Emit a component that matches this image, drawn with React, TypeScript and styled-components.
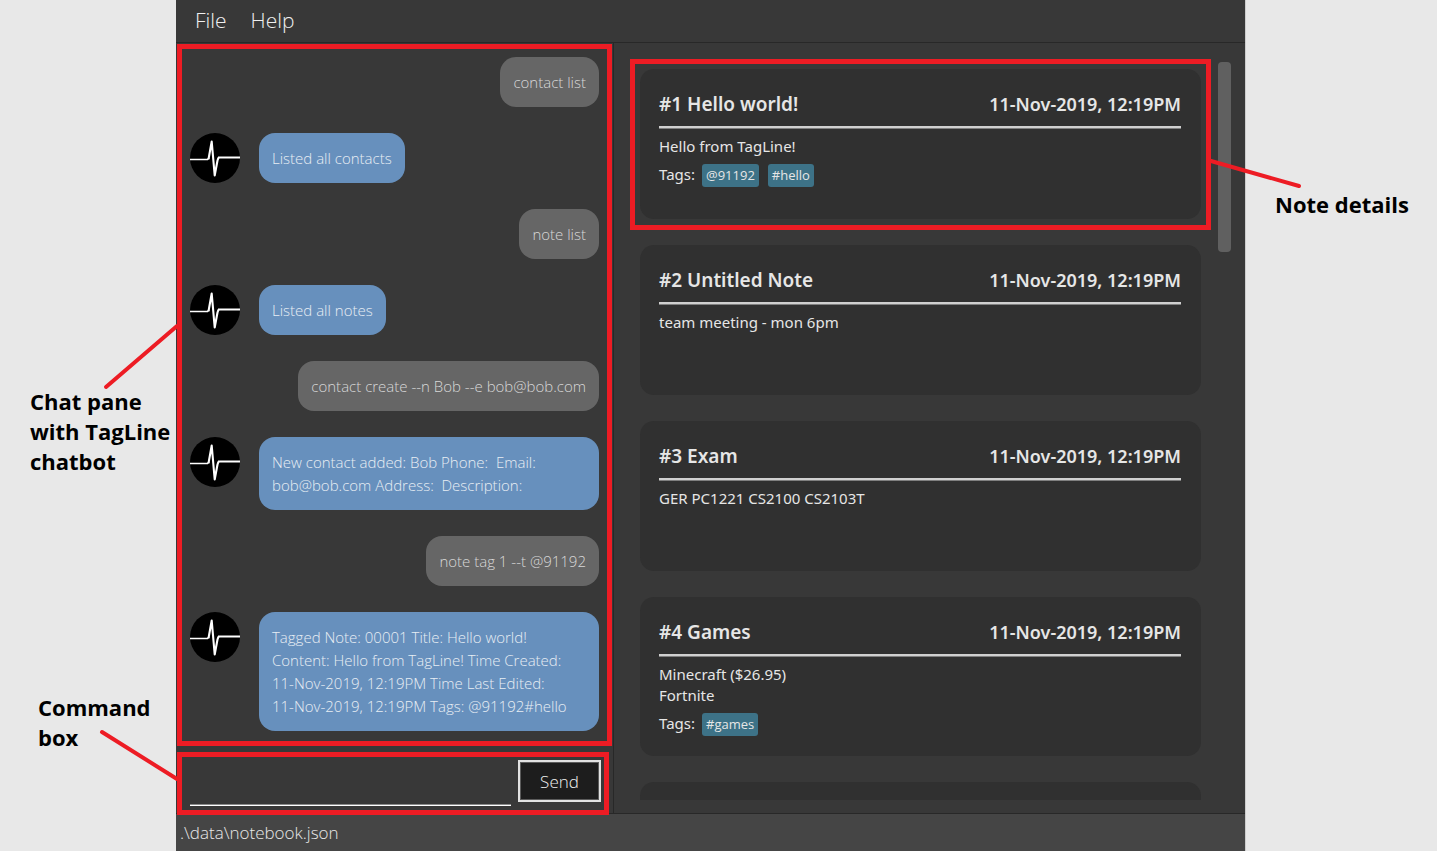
import React from "react";
import styled, { createGlobalStyle } from "styled-components";

const RED = "#ed1c24";

const GlobalStyle = createGlobalStyle`
  *, *::before, *::after { box-sizing: border-box; }
  body {
    margin: 0;
    background: #e8e8e8;
    font-family: "Open Sans", "Noto Sans", sans-serif;
  }
  h2, p, ul, ol { margin: 0; padding: 0; }
  ul, ol { list-style: none; }
`;

const Page = styled.div`
  display: grid;
  grid-template-columns: 176fr 1069fr 192fr;
  height: 100vh;
  overflow: hidden;
`;

const Gutter = styled.aside<{ $side: "left" | "right" }>`
  position: relative;
  z-index: 2;
  display: flex;
  flex-direction: column;
  padding-left: 30px;
  padding-top: ${(p) => (p.$side === "left" ? 386 : 189)}px;
  gap: 216px;
`;

const Callout = styled.p<{ $indent?: boolean }>`
  padding-left: ${(p) => (p.$indent ? 8 : 0)}px;
  color: #000;
  font-size: 22px;
  font-weight: 700;
  line-height: 30px;
  white-space: pre;
`;

const Leaders = styled.svg<{ $side: "left" | "right" }>`
  position: absolute;
  top: 0;
  ${(p) => (p.$side === "left" ? "right: 0;" : "left: 0;")}
  width: 176px;
  height: 851px;
  overflow: visible;
  pointer-events: none;
  stroke: ${RED};
  stroke-width: 4;
  stroke-linecap: round;
`;

const Window = styled.main`
  display: flex;
  flex-direction: column;
  min-height: 0;
  background: #383838;
  color: #e6e6e6;
  box-shadow: 1px 0 0 #cccccc;
`;

const MenuBar = styled.nav`
  display: flex;
  flex: none;
  align-items: center;
  gap: 24px;
  height: 43px;
  padding: 0 19px 3px;
  border-bottom: 1px solid #282828;
`;

const MenuButton = styled.button`
  padding: 0;
  border: 0;
  background: none;
  color: #f0f0f0;
  font: 300 21px/30px "Open Sans", sans-serif;
`;

const Workspace = styled.div`
  display: grid;
  grid-template-columns: 438fr 631fr;
  flex: 1;
  min-height: 0;
`;

const Conversation = styled.section`
  display: flex;
  flex-direction: column;
  min-height: 0;
  border-right: 1px solid #282828;
`;

const Highlight = styled.div<{ $inset: string }>`
  position: absolute;
  z-index: 1;
  inset: ${(p) => p.$inset};
  border: 5px solid ${RED};
  pointer-events: none;
`;

const ChatPane = styled.div`
  position: relative;
  flex: 1;
  min-height: 0;
`;

const Messages = styled.ol`
  display: flex;
  flex-direction: column;
  gap: 26px;
  height: 100%;
  padding: 14px;
  overflow: hidden;
`;

const Message = styled.li<{ $own: boolean }>`
  display: flex;
  flex: none;
  justify-content: ${(p) => (p.$own ? "flex-end" : "flex-start")};
  align-items: flex-start;
  gap: 19px;
`;

const Bubble = styled.p<{ $own: boolean }>`
  padding: 14px 13px 13px;
  border-radius: 16px;
  background: ${(p) => (p.$own ? "#666666" : "#6790bd")};
  color: ${(p) => (p.$own ? "#d8d8d8" : "#e8eef4")};
  font-size: 15px;
  font-weight: 300;
  line-height: 23px;
  white-space: pre-wrap;
`;

const Avatar = styled.svg`
  flex: none;
  width: 50px;
  height: 50px;
`;

const CommandBar = styled.form`
  position: relative;
  display: flex;
  flex: none;
  align-items: flex-end;
  gap: 7px;
  height: 65px;
  padding: 12px 12px 7px 14px;
`;

const CommandInput = styled.input`
  flex: 1;
  min-width: 0;
  height: 40px;
  padding: 0;
  border: 0;
  border-bottom: 1px solid #ffffff;
  border-radius: 0;
  outline: 0;
  background: transparent;
  box-shadow: inset 0 -1px 0 #8a8a8a;
  color: #ffffff;
  font: 300 18px/30px "Open Sans", sans-serif;
`;

const SendButton = styled.button`
  align-self: flex-start;
  width: 83px;
  height: 42px;
  padding: 2px 0 0;
  border: 2px solid #e2e2e2;
  background: #1d1d1d;
  box-shadow: inset 0 0 0 1px #5c5c5c;
  color: #f0f0f0;
  font: 300 17px/24px "Open Sans", sans-serif;
`;

const NotesPane = styled.section`
  display: flex;
  gap: 17px;
  min-height: 0;
  padding: 19px 14px 13px 13px;
  font-family: "Noto Sans", "Open Sans", sans-serif;
`;

const NoteList = styled.ul`
  display: flex;
  flex: 1;
  flex-direction: column;
  gap: 26px;
  min-width: 0;
  padding: 7px 0 0 13px;
  overflow: hidden;
`;

const NotesFrame = styled.div`
  position: relative;
  display: flex;
  flex: 1;
  min-width: 0;
  min-height: 0;
`;

const NoteHighlight = styled(Highlight)`
  bottom: auto;
  height: 171px;
`;

const NoteCard = styled.li`
  flex: none;
  min-height: 150px;
  padding: 21px 20px 20px 19px;
  border-radius: 14px;
  background: #303030;
`;

const NoteHead = styled.header`
  display: flex;
  justify-content: space-between;
  padding-bottom: 8px;
  border-bottom: 2px solid #d0d0d0;
  box-shadow: 0 1px 0 #808080;
  line-height: 28px;
`;

const NoteTitle = styled.h2`
  font-size: 19px;
  font-weight: 600;
`;

const NoteTime = styled.time`
  font-size: 18px;
  font-weight: 600;
`;

const NoteText = styled.p`
  padding-top: 8px;
  font-size: 15px;
  line-height: 21px;
  white-space: pre-line;
`;

const TagRow = styled.div`
  display: flex;
  height: 23px;
  margin-top: 7px;
  font-size: 15px;
  line-height: 21px;
`;

const Tag = styled.span`
  margin-left: 7px;
  margin-right: 2px;
  padding: 0 4px;
  border-radius: 3px;
  background: #3d7287;
  font-family: "Open Sans", sans-serif;
  font-size: 13px;
  font-weight: 500;
  line-height: 22px;
`;

const ScrollThumb = styled.div`
  flex: none;
  width: 13px;
  height: 190px;
  border-radius: 4px;
  background: #606060;
`;

const StatusBar = styled.footer`
  flex: none;
  height: 38px;
  padding: 0 4px;
  border-top: 1px solid #282828;
  background: #454545;
  color: #e8e8e8;
  font-size: 17px;
  font-weight: 300;
  line-height: 37px;
`;

const messages = [
  { own: true, text: "contact list" },
  { own: false, text: "Listed all contacts" },
  { own: true, text: "note list" },
  { own: false, text: "Listed all notes" },
  { own: true, text: "contact create --n Bob --e bob@bob.com" },
  { own: false, text: "New contact added: Bob Phone:  Email: bob@bob.com Address:  Description:" },
  { own: true, text: "note tag 1 --t @91192" },
  {
    own: false,
    text: "Tagged Note: 00001 Title: Hello world! Content: Hello from TagLine! Time Created: 11-Nov-2019, 12:19PM Time Last Edited:\n11-Nov-2019, 12:19PM Tags: @91192#hello",
  },
];

const notes = [
  { title: "Hello world!", text: "Hello from TagLine!", tags: ["@91192", "#hello"] },
  { title: "Untitled Note", text: "team meeting - mon 6pm", tags: [] },
  { title: "Exam", text: "GER PC1221 CS2100 CS2103T", tags: [] },
  { title: "Games", text: "Minecraft ($26.95)\nFortnite", tags: ["#games"] },
];

function BotAvatar() {
  return (
    <Avatar viewBox="0 0 50 50" aria-hidden="true">
      <circle cx="25" cy="25" r="25" fill="#000" />
      <g fill="none" stroke="#fff" strokeLinejoin="round">
        <path d="M0 26.5H17.5L19 25" strokeWidth="1.7" />
        <path d="M18.5 26.3 21.7 8.5 24.7 42.5 27.5 27.5 28.5 24.6" strokeWidth="2.1" />
        <path d="M28 24.5H50" strokeWidth="2" />
      </g>
    </Avatar>
  );
}

export default function App() {
  return (
    <>
      <GlobalStyle />
      <Page>
        <Gutter $side="left">
          <Callout>{"Chat pane\nwith TagLine\nchatbot"}</Callout>
          <Callout $indent>{"Command\nbox"}</Callout>
          <Leaders $side="left" aria-hidden="true">
            <line x1="106" y1="387" x2="177" y2="326" />
            <line x1="102" y1="732" x2="177" y2="779" />
          </Leaders>
        </Gutter>
        <Window>
          <MenuBar>
            <MenuButton type="button">File</MenuButton>
            <MenuButton type="button">Help</MenuButton>
          </MenuBar>
          <Workspace>
            <Conversation>
              <ChatPane>
                <Messages>
                  {messages.map((m) => (
                    <Message key={m.text} $own={m.own}>
                      {!m.own && <BotAvatar />}
                      <Bubble $own={m.own}>{m.text}</Bubble>
                    </Message>
                  ))}
                </Messages>
                <Highlight $inset="1px 1px 2px 1px" />
              </ChatPane>
              <CommandBar onSubmit={(e) => e.preventDefault()}>
                <CommandInput type="text" aria-label="Command" />
                <SendButton type="submit">Send</SendButton>
                <Highlight $inset="4px 4px -2px 1px" />
              </CommandBar>
            </Conversation>
            <NotesPane>
              <NotesFrame>
                <NoteList>
                  {notes.map((n, i) => (
                    <NoteCard key={n.title}>
                      <NoteHead>
                        <NoteTitle>{`#${i + 1} ${n.title}`}</NoteTitle>
                        <NoteTime>11-Nov-2019, 12:19PM</NoteTime>
                      </NoteHead>
                      <NoteText>{n.text}</NoteText>
                      {n.tags.length > 0 && (
                        <TagRow>
                          Tags:
                          {n.tags.map((t) => (
                            <Tag key={t}>{t}</Tag>
                          ))}
                        </TagRow>
                      )}
                    </NoteCard>
                  ))}
                  <NoteCard />
                </NoteList>
                <NoteHighlight $inset="-3px -10px auto 3px" />
              </NotesFrame>
              <ScrollThumb />
            </NotesPane>
          </Workspace>
          <StatusBar>.\data\notebook.json</StatusBar>
        </Window>
        <Gutter $side="right">
          <Callout>Note details</Callout>
          <Leaders $side="right" aria-hidden="true">
            <line x1="-34" y1="161" x2="54" y2="186" />
          </Leaders>
        </Gutter>
      </Page>
    </>
  );
}
